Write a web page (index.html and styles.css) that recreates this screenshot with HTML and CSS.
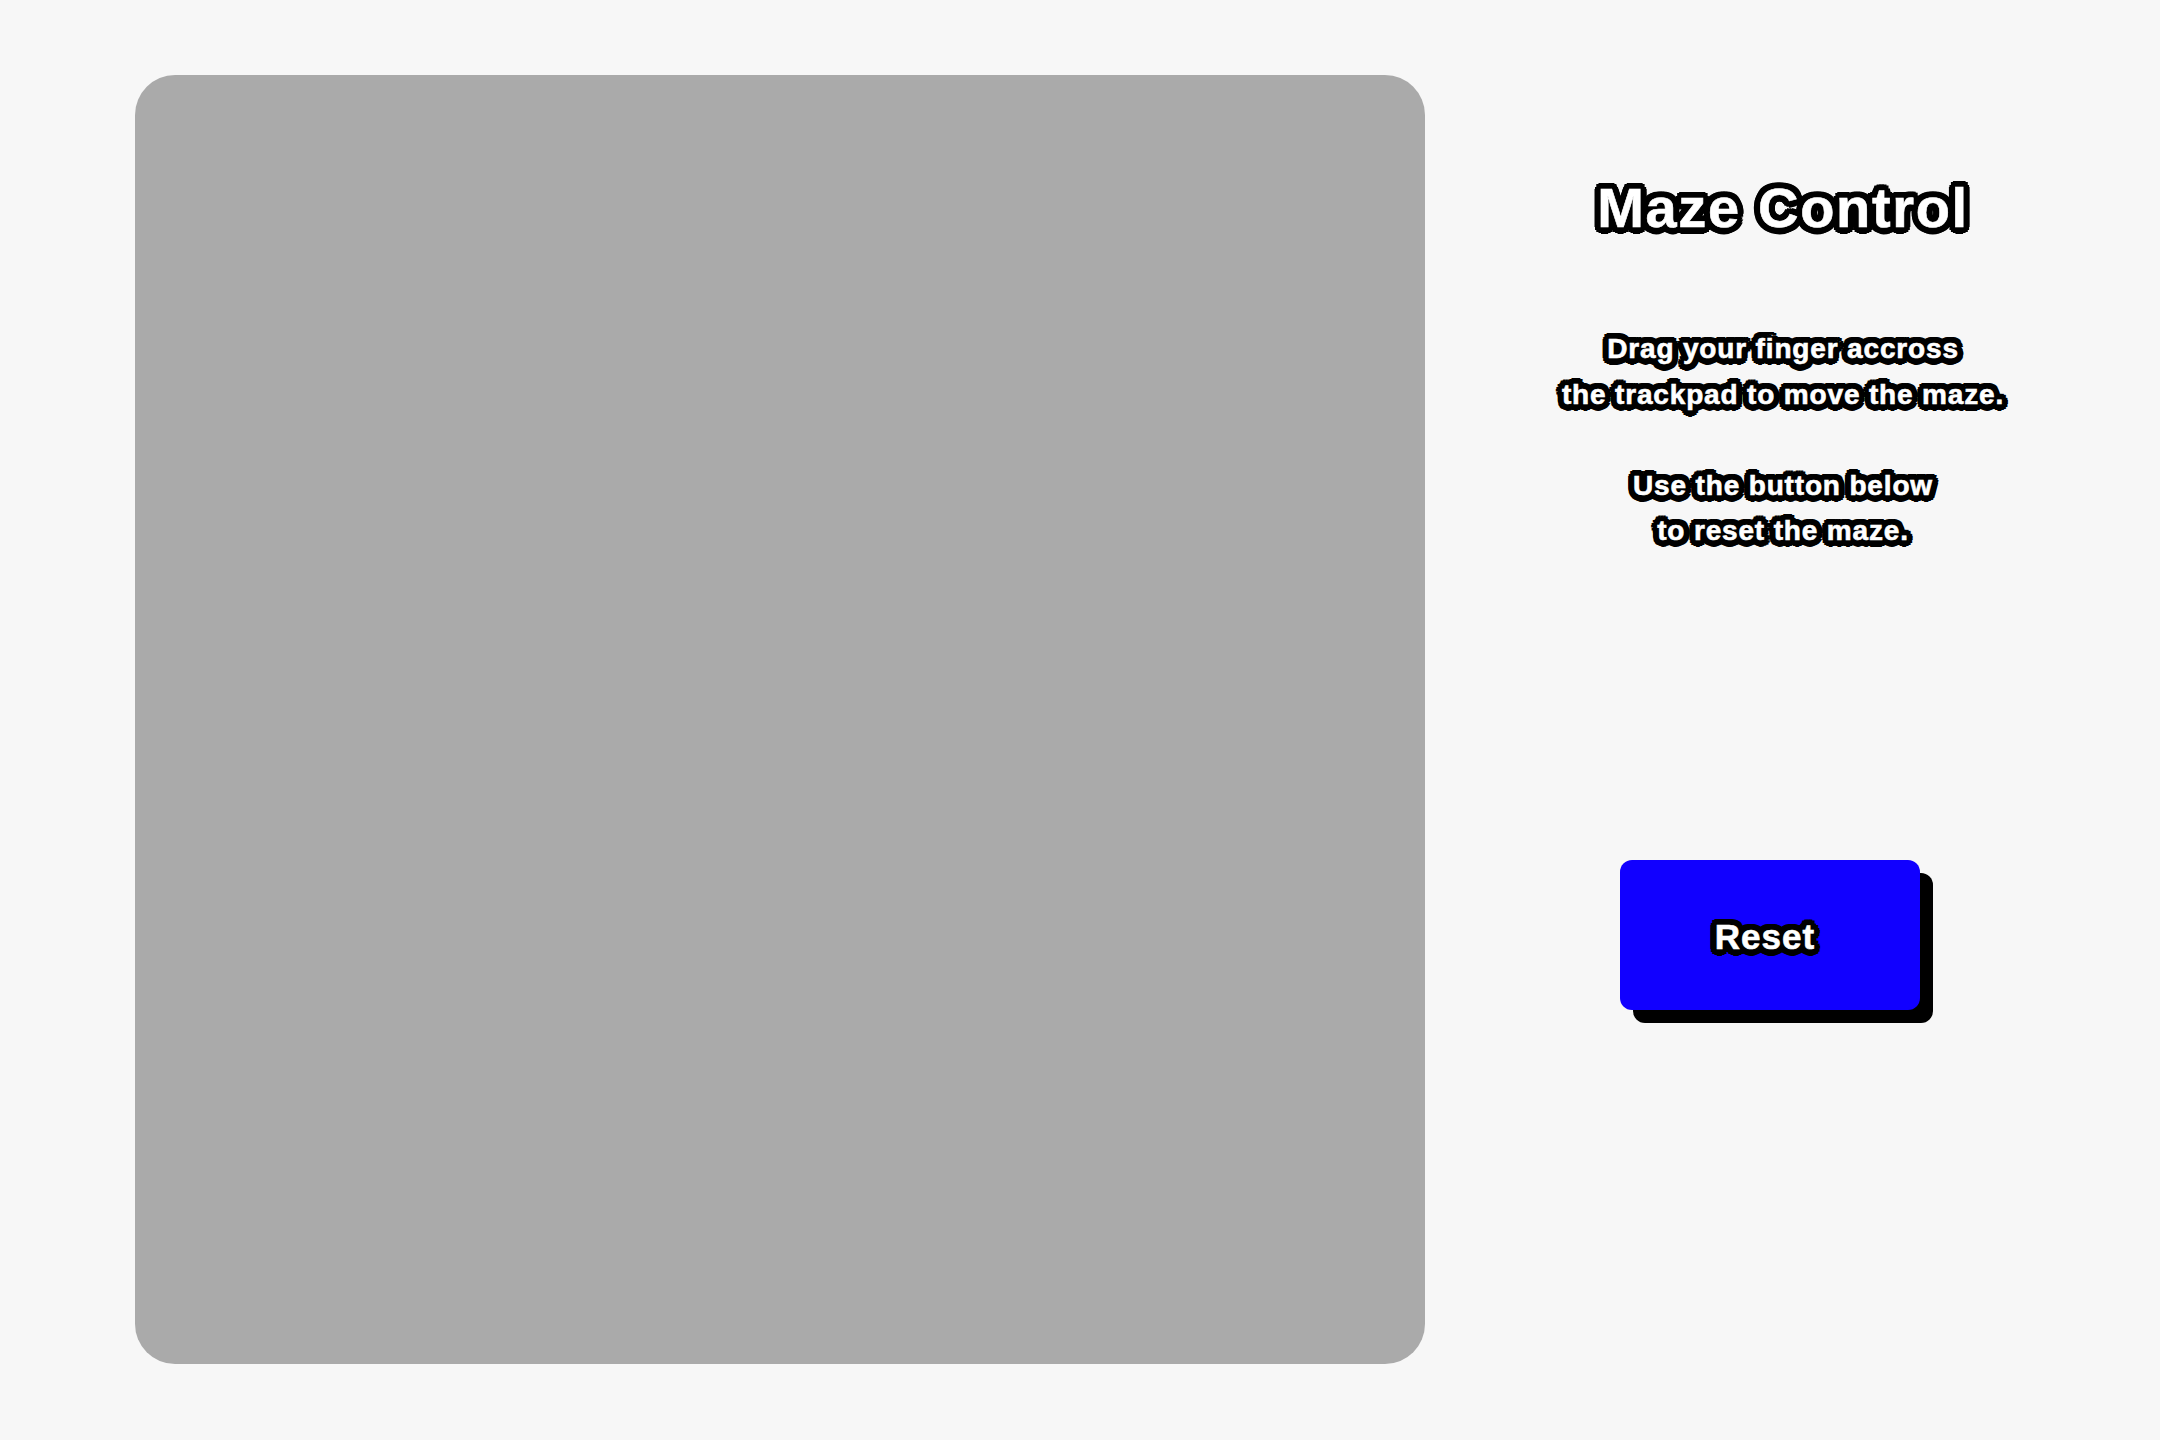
FILE: index.html
```html
<!DOCTYPE html>
<html lang="en">
<head>
<meta charset="utf-8">
<title>Maze Control</title>
<link rel="stylesheet" href="styles.css">
</head>
<body>
<main class="layout">
  <div class="trackpad"></div>
  <section class="panel">
    <h1 class="title outlined">Maze Control</h1>
    <div class="instructions outlined">
      <p>Drag your finger accross<br>the trackpad to move the maze.</p>
      <p>Use the button below<br>to reset the maze.</p>
    </div>
    <button class="reset outlined" type="button">Reset</button>
  </section>
</main>
</body>
</html>
```
FILE: styles.css
```css
html, body {
  margin: 0;
  padding: 0;
}
body {
  background: #f7f7f7;
  width: 2160px;
  height: 1440px;
  overflow: hidden;
  font-family: "Liberation Sans", Arial, sans-serif;
}
.layout {
  display: flex;
  align-items: flex-start;
  padding: 75px 0 0 135px;
}
.trackpad {
  width: 1290px;
  height: 1289px;
  background: #aaaaaa;
  border-radius: 40px;
  flex: none;
}
.panel {
  width: 716px;
  display: flex;
  flex-direction: column;
  align-items: center;
  padding-top: 103px;
}
.outlined {
  color: #ffffff;
  font-weight: bold;
  letter-spacing: 0.03em;
  -webkit-text-stroke: 0.6px #ffffff;
  text-shadow:
    6.5px 0 0 #000, 6px 2.5px 0 #000, 4.6px 4.6px 0 #000, 2.5px 6px 0 #000,
    0 6.5px 0 #000, -2.5px 6px 0 #000, -4.6px 4.6px 0 #000, -6px 2.5px 0 #000,
    -6.5px 0 0 #000, -6px -2.5px 0 #000, -4.6px -4.6px 0 #000, -2.5px -6px 0 #000,
    0 -6.5px 0 #000, 2.5px -6px 0 #000, 4.6px -4.6px 0 #000, 6px -2.5px 0 #000,
    3.5px 0 0 #000, -3.5px 0 0 #000, 0 3.5px 0 #000, 0 -3.5px 0 #000,
    2.5px 2.5px 0 #000, -2.5px 2.5px 0 #000, 2.5px -2.5px 0 #000, -2.5px -2.5px 0 #000;
}
.title {
  margin: 0;
  font-size: 56px;
  line-height: 60px;
}
.instructions {
  margin-top: 88px;
  font-size: 28px;
  line-height: 45.5px;
  text-align: center;
}
.instructions p {
  margin: 0;
}
.instructions p + p {
  margin-top: 45.5px;
}
.reset {
  margin-top: 306px;
  margin-right: 26px;
  width: 300px;
  height: 150px;
  padding: 4px 10px 0 0;
  border: none;
  border-radius: 12px;
  background: #1100ff;
  box-shadow: 13px 13px 0 #000;
  font-family: "Liberation Sans", Arial, sans-serif;
  font-size: 35px;
  cursor: pointer;
}
```
